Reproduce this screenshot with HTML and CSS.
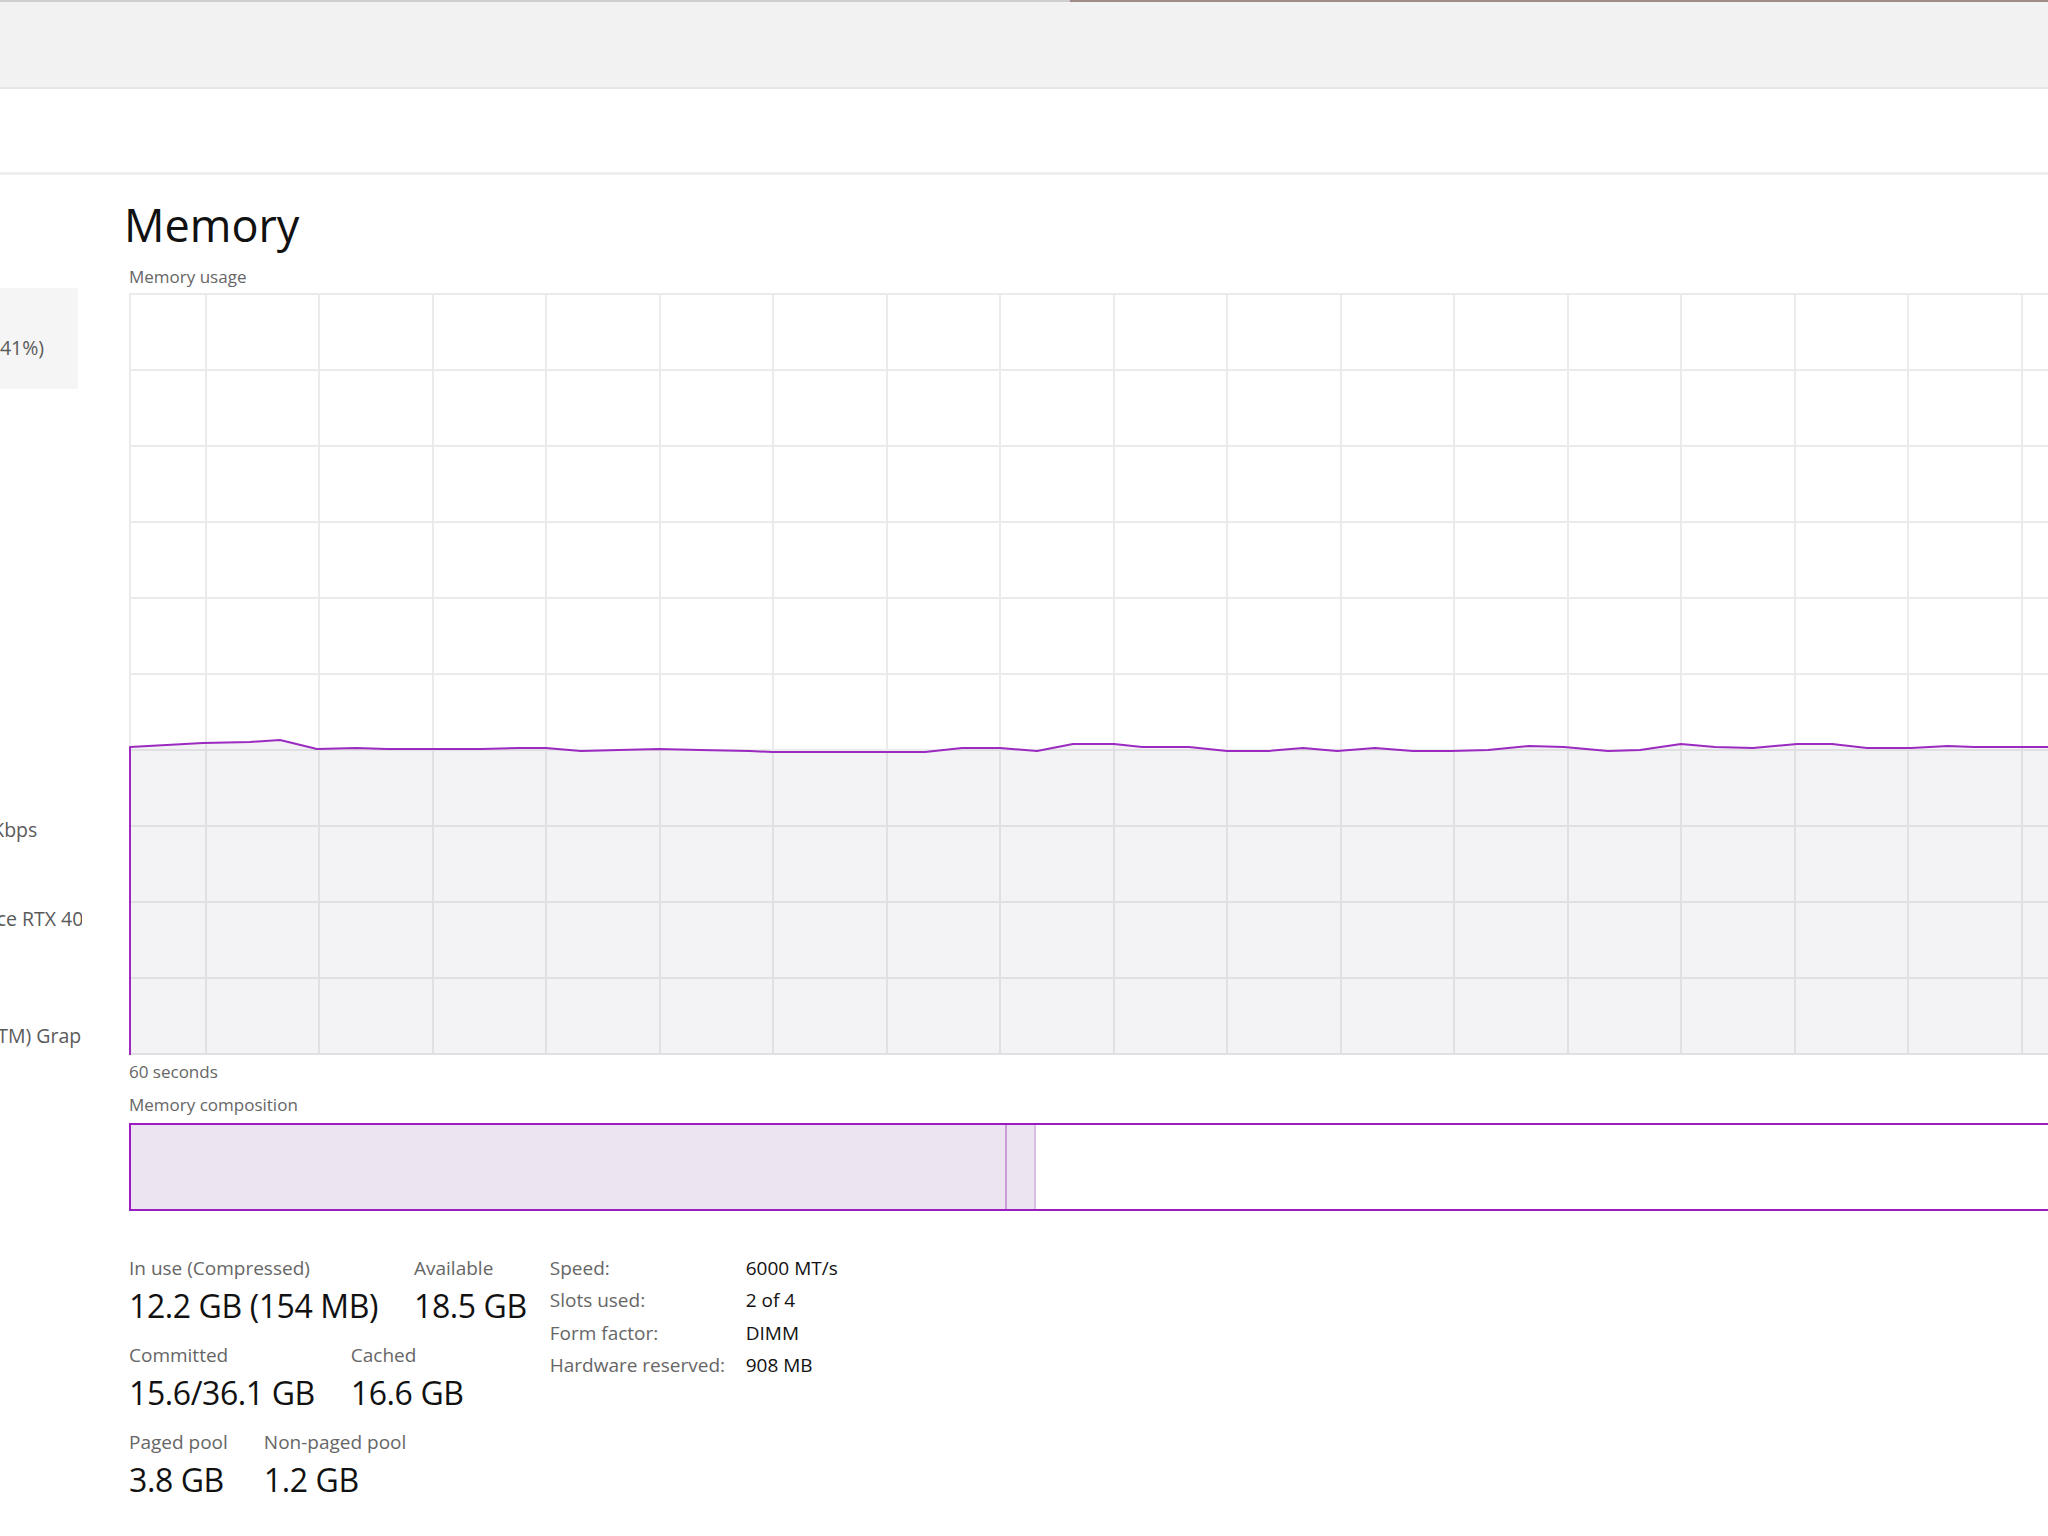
FILE: index.html
```html
<!DOCTYPE html>
<html lang="en">
<head>
    <meta charset="UTF-8">
    <title>Task Manager - Memory</title>
    <link rel="stylesheet" href="styles.css">
</head>
<body>
    <div class="window">
        <div class="titlebar"></div>
        <div class="toolbar"></div>

        <div class="main">
            <!-- left list, scrolled partly out of view -->
            <nav class="sidebar">
                <div class="side-list">
                    <div class="side-item">
                        <p class="side-title">CPU</p>
                        <p class="side-line">3% 4.29 GHz</p>
                    </div>
                    <div class="side-item active">
                        <p class="side-title">Memory</p>
                        <p class="side-line">12.2/31.7 GB (41%)</p>
                    </div>
                    <div class="side-item">
                        <p class="side-title">Disk 0</p>
                        <p class="side-line">SSD</p>
                        <p class="side-line">0%</p>
                    </div>
                    <div class="side-item">
                        <p class="side-title">Disk 1</p>
                        <p class="side-line">SSD</p>
                        <p class="side-line">0%</p>
                    </div>
                    <div class="side-item">
                        <p class="side-title">Disk 2</p>
                        <p class="side-line">HDD</p>
                        <p class="side-line">0%</p>
                    </div>
                    <div class="side-item">
                        <p class="side-title">Ethernet</p>
                        <p class="side-line">Ethernet</p>
                        <p class="side-line">S: 8.0 R: 16.0 Kbps</p>
                    </div>
                    <div class="side-item">
                        <p class="side-title">GPU 0</p>
                        <p class="side-line">NVIDIA GeForce RTX 4070</p>
                        <p class="side-line">1%</p>
                    </div>
                    <div class="side-item">
                        <p class="side-title">GPU 1</p>
                        <p class="side-line">AMD Radeon(TM) Graphics</p>
                        <p class="side-line">0%</p>
                    </div>
                </div>
            </nav>

            <section class="content">
                <h1 class="title">Memory</h1>
                <div class="small-label usage-label">Memory usage</div>

                <div class="chart">
                    <svg width="1919" height="762" viewBox="0 0 1919 762">
                        <rect x="0" y="0" width="1919" height="762" fill="#ffffff"/>
                        <polygon class="chart-fill" points="0,762 0,454 74,450 121,449 151,447 188,456 227,455 258,456 302,456 352,456 390,455 417,455 452,458 490,457 530,456 571,457 621,458 643,459 755,459 796,459 833,455 871,455 908,458 944,451 985,451 1013,454 1060,454 1098,458 1139,458 1174,455 1208,458 1246,455 1284,458 1322,458 1359,457 1400,453 1435,454 1479,458 1511,457 1552,451 1586,454 1624,455 1668,451 1703,451 1738,455 1782,455 1819,453 1845,454 1919,454 1919,762"/>
                        <path class="chart-grid" d="M1 0V762 M77 0V762 M190 0V762 M304 0V762 M417 0V762 M531 0V762 M644 0V762 M758 0V762 M871 0V762 M985 0V762 M1098 0V762 M1212 0V762 M1325 0V762 M1439 0V762 M1552 0V762 M1666 0V762 M1779 0V762 M1893 0V762
                            M0 1H1919 M0 77H1919 M0 153H1919 M0 229H1919 M0 305H1919 M0 381H1919 M0 457H1919 M0 533H1919 M0 609H1919 M0 685H1919 M0 761H1919"/>
                        <polyline class="chart-line" points="1,762 1,454 74,450 121,449 151,447 188,456 227,455 258,456 302,456 352,456 390,455 417,455 452,458 490,457 530,456 571,457 621,458 643,459 755,459 796,459 833,455 871,455 908,458 944,451 985,451 1013,454 1060,454 1098,458 1139,458 1174,455 1208,458 1246,455 1284,458 1322,458 1359,457 1400,453 1435,454 1479,458 1511,457 1552,451 1586,454 1624,455 1668,451 1703,451 1738,455 1782,455 1819,453 1845,454 1919,454"/>
                    </svg>
                </div>

                <div class="small-label seconds-label">60 seconds</div>
                <div class="small-label comp-label">Memory composition</div>

                <div class="comp-bar">
                    <div class="seg seg-inuse"></div>
                    <div class="seg seg-modified"></div>
                    <div class="seg seg-standby"></div>
                </div>

                <div class="stats">
                    <div class="stats-main">
                        <div class="stat-row">
                            <div class="stat">
                                <div class="stat-label">In use (Compressed)</div>
                                <div class="stat-value">12.2 GB (154 MB)</div>
                            </div>
                            <div class="stat">
                                <div class="stat-label">Available</div>
                                <div class="stat-value">18.5 GB</div>
                            </div>
                        </div>
                        <div class="stat-row">
                            <div class="stat">
                                <div class="stat-label">Committed</div>
                                <div class="stat-value">15.6/36.1 GB</div>
                            </div>
                            <div class="stat">
                                <div class="stat-label">Cached</div>
                                <div class="stat-value">16.6 GB</div>
                            </div>
                        </div>
                        <div class="stat-row">
                            <div class="stat">
                                <div class="stat-label">Paged pool</div>
                                <div class="stat-value">3.8 GB</div>
                            </div>
                            <div class="stat">
                                <div class="stat-label">Non-paged pool</div>
                                <div class="stat-value">1.2 GB</div>
                            </div>
                        </div>
                    </div>

                    <dl class="specs">
                        <dt>Speed:</dt><dd>6000 MT/s</dd>
                        <dt>Slots used:</dt><dd>2 of 4</dd>
                        <dt>Form factor:</dt><dd>DIMM</dd>
                        <dt>Hardware reserved:</dt><dd>908 MB</dd>
                    </dl>
                </div>
            </section>
        </div>
    </div>
</body>
</html>
```

FILE: styles.css
```css
body {
    margin: 0;
    font-family: 'Open Sans', 'Noto Sans', sans-serif;
    background: #ffffff;
    color: #111;
    overflow: hidden;
}
.window {
    width: 2048px;
    height: 1536px;
    display: flex;
    flex-direction: column;
    overflow: hidden;
}
.titlebar {
    height: 87px;
    flex: none;
    background: linear-gradient(to right, #cfcfcf 0, #cfcfcf 1070px, #a08c87 1070px) top left / 100% 2px no-repeat, #f2f2f2;
    border-bottom: 2px solid #e6e6e6;
}
.toolbar {
    height: 83px;
    flex: none;
    background: #ffffff;
    border-bottom: 3px solid #efefef;
}
.main {
    flex: 1;
    display: flex;
    min-height: 0;
    overflow: hidden;
}

/* sidebar */
.sidebar {
    width: 82px;
    flex: none;
    overflow: hidden;
}
.side-list {
    margin: -12px 4px 0 -127px;
}
.side-item {
    height: 117px;
    box-sizing: border-box;
    border-top: 8px solid transparent;
    border-bottom: 8px solid transparent;
    background-clip: padding-box;
    padding-bottom: 10px;
    display: flex;
    flex-direction: column;
    justify-content: center;
}
.side-item.active {
    background-color: #f5f5f5;
}
.side-item p {
    margin: 0;
    white-space: nowrap;
    line-height: 28px;
}
.side-title {
    font-size: 21px;
    color: #1a1a1a;
}
.side-line {
    font-size: 19.5px;
    color: #5a5a5a;
}

/* content */
.content {
    flex: 1;
    min-width: 0;
    padding-left: 47px;
    overflow: hidden;
}
.title {
    margin: 23px 0 0 -5px;
    font-size: 45px;
    font-weight: 400;
    line-height: 54px;
    color: #111;
}
.small-label {
    font-size: 17px;
    line-height: 24px;
    color: #666;
    white-space: nowrap;
}
.usage-label {
    margin-top: 13px;
}
.chart {
    margin-top: 4px;
    height: 762px;
}
.chart svg {
    display: block;
}
.chart-fill {
    fill: #f3f2f5;
}
.chart-grid {
    fill: none;
    stroke: rgba(0, 0, 0, 0.08);
    stroke-width: 2;
}
.chart-line {
    fill: none;
    stroke: #9b2bc0;
    stroke-width: 2;
    stroke-linejoin: round;
}
.seconds-label {
    margin-top: 5px;
}
.comp-label {
    margin-top: 9px;
}
.comp-bar {
    margin-top: 6px;
    height: 84px;
    border: 2px solid #9c1cc4;
    border-right: none;
    display: flex;
}
.seg-inuse {
    width: 874px;
    background: #ede4f1;
    border-right: 2px solid #c99bd8;
}
.seg-modified {
    width: 27px;
    background: #ede4f1;
    border-right: 2px solid #dcbde6;
}
.seg-standby {
    flex: 1;
    background: #ffffff;
}

/* stats */
.stats {
    margin-top: 44px;
    display: flex;
    gap: 23px;
    align-items: flex-start;
}
.stats-main {
    display: flex;
    flex-direction: column;
    gap: 16px;
}
.stat-row {
    display: flex;
    gap: 36px;
}
.stat-label {
    font-size: 19px;
    line-height: 26px;
    color: #666;
    white-space: nowrap;
}
.stat-value {
    margin-top: 5px;
    font-size: 32px;
    line-height: 40px;
    letter-spacing: -0.4px;
    color: #111;
    white-space: nowrap;
}
.specs {
    margin: -3px 0 0;
    display: grid;
    grid-template-columns: 196px auto;
    font-size: 19px;
    line-height: 32.3px;
    white-space: nowrap;
}
.specs dt {
    color: #666;
}
.specs dd {
    margin: 0;
    color: #111;
}
```
